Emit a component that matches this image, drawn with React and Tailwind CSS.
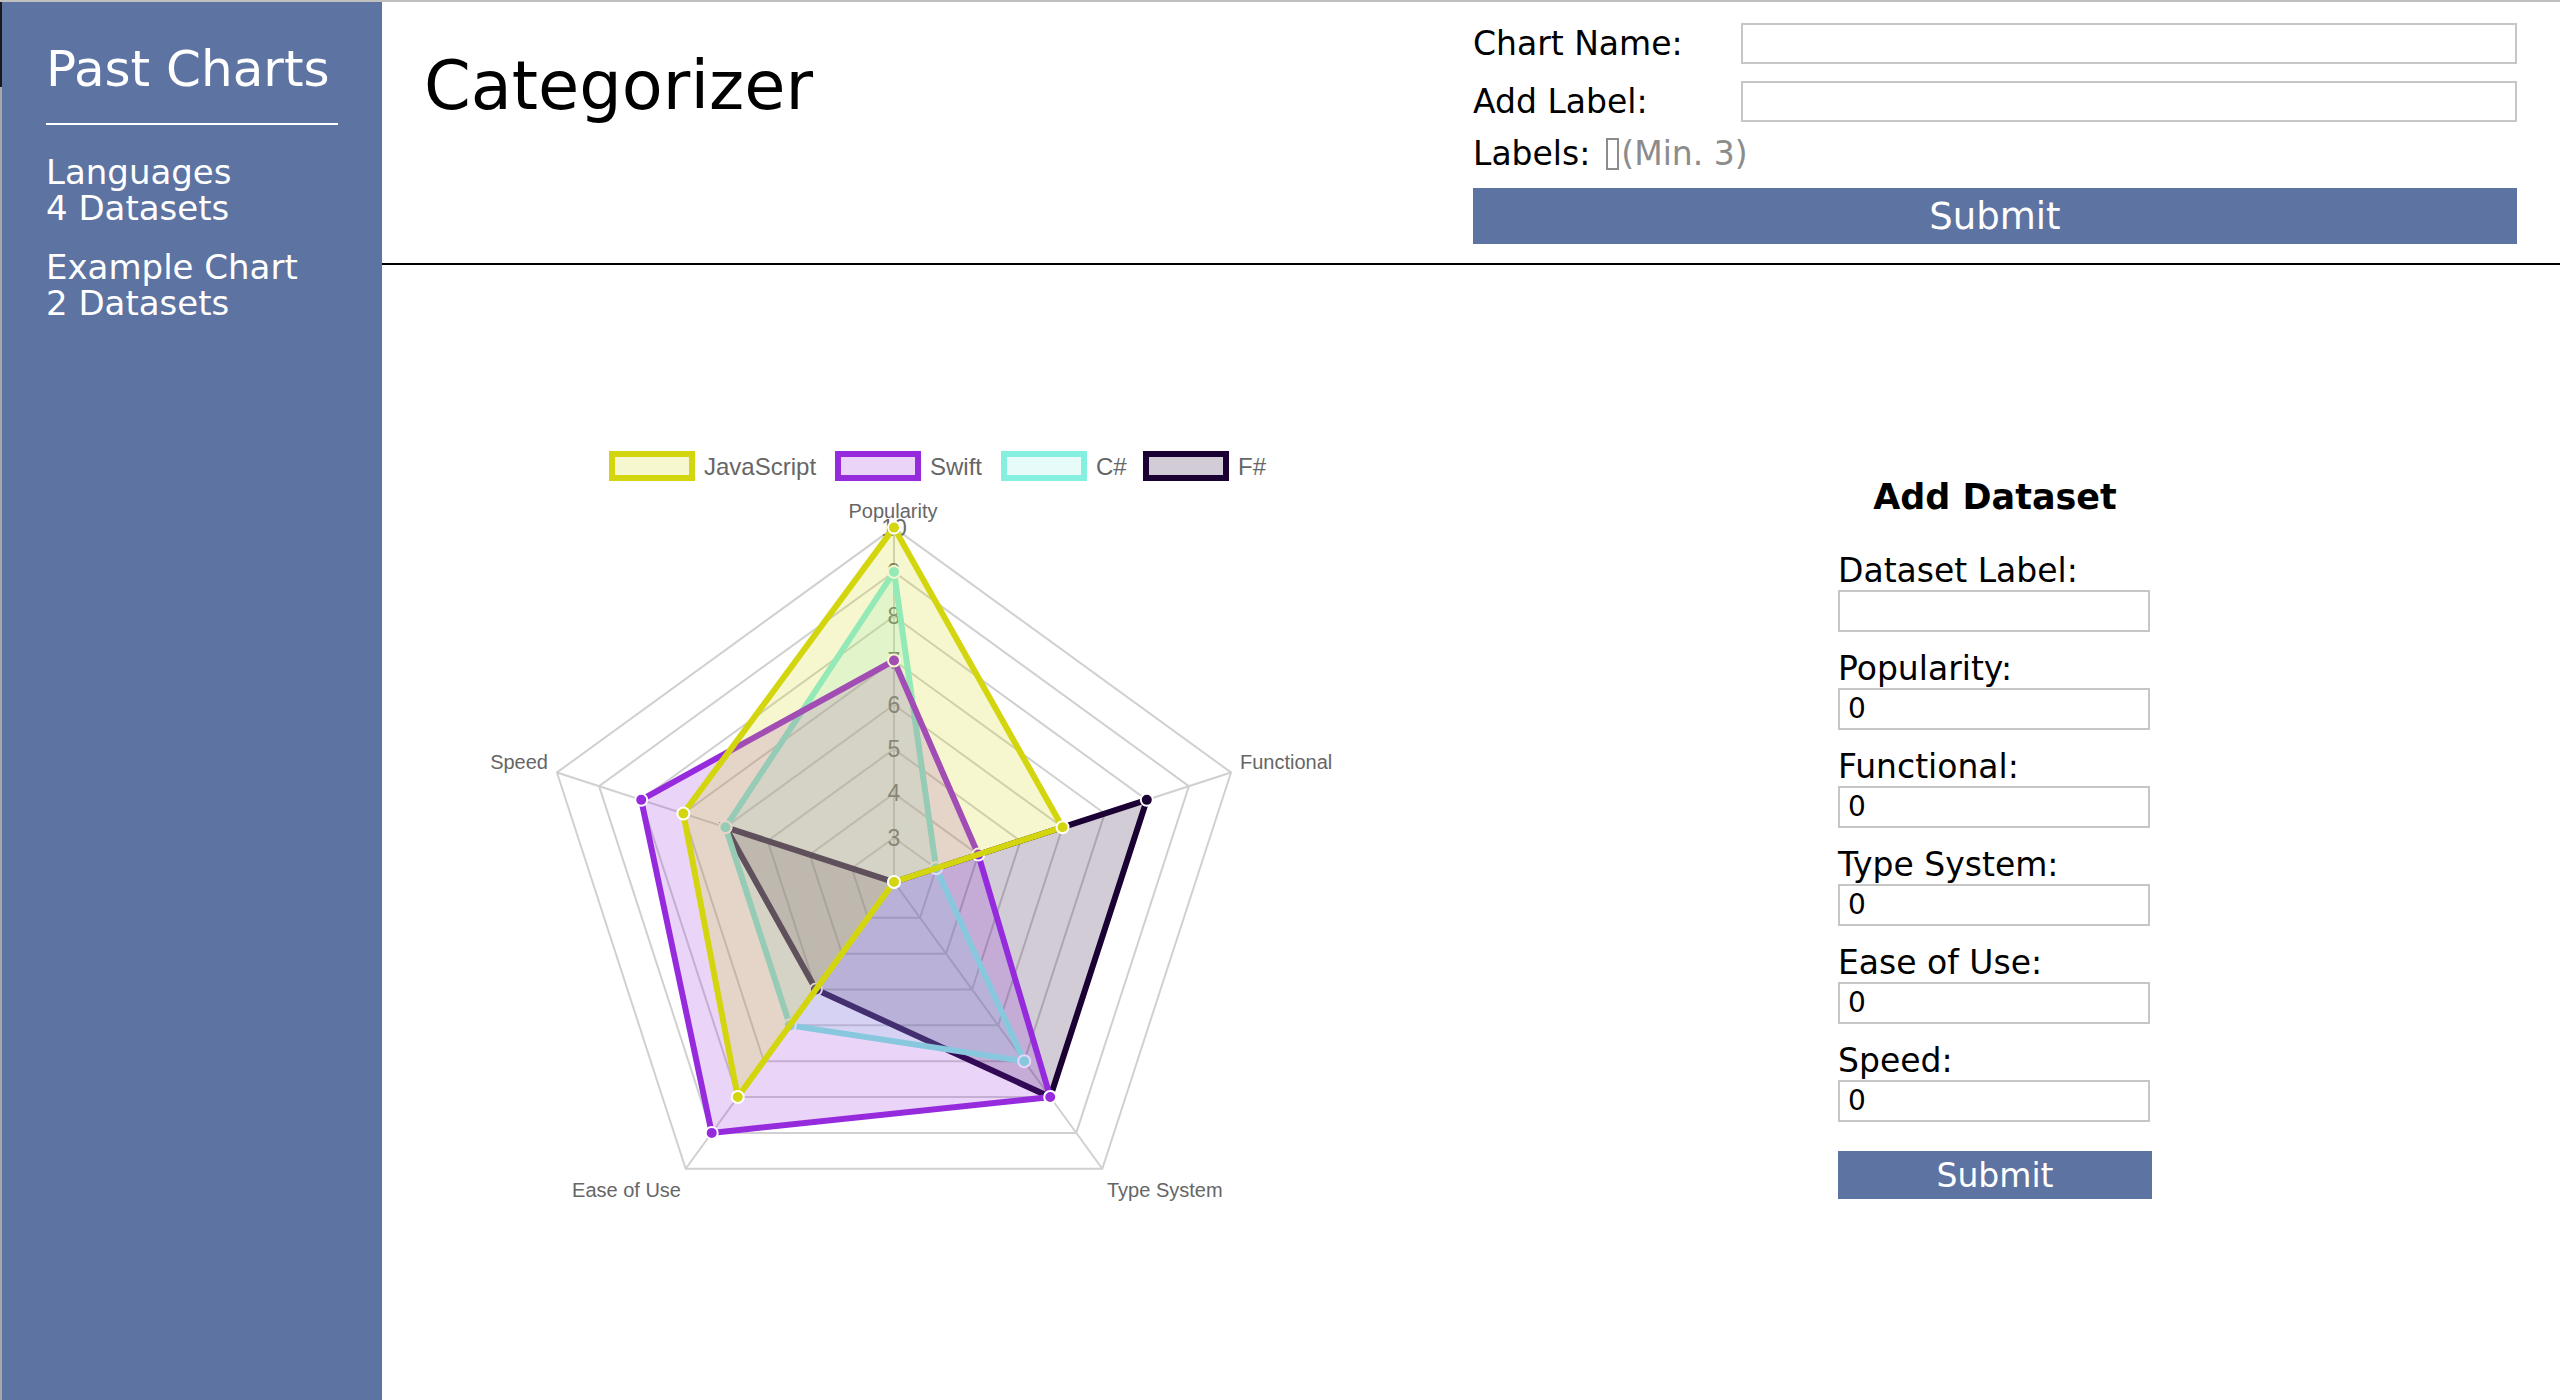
import React from 'react'

const AXES = ['Popularity', 'Functional', 'Type System', 'Ease of Use', 'Speed']

const DATASETS = [
  { label: 'JavaScript', color: '#d3d60f', fill: 'rgba(211,214,15,0.2)', data: [10, 6, 2, 8, 7] },
  { label: 'Swift', color: '#962bdd', fill: 'rgba(150,43,221,0.2)', data: [7, 4, 8, 9, 8] },
  { label: 'C#', color: '#85efe0', fill: 'rgba(133,239,224,0.2)', data: [9, 3, 7, 6, 6] },
  { label: 'F#', color: '#1a0033', fill: 'rgba(26,0,51,0.2)', data: [2, 8, 8, 5, 6] },
]

const CX = 894
const CY = 882
const UNIT = 44.3
const MIN = 2

function point(i, v) {
  const a = -Math.PI / 2 + (i * 2 * Math.PI) / 5
  const r = (v - MIN) * UNIT
  return [CX + r * Math.cos(a), CY + r * Math.sin(a)]
}

const poly = vals => vals.map((v, i) => point(i, v).join(',')).join(' ')

const LEGEND_X = [612, 838, 1004, 1146]

function RadarChart() {
  const rings = [3, 4, 5, 6, 7, 8, 9, 10]
  return (
    <svg width="1100" height="1000" viewBox="382 265 1100 1000" className="shrink-0 font-['Liberation_Sans',Arial,sans-serif]">
      {/* legend */}
      {DATASETS.map((d, i) => (
        <g key={d.label}>
          <rect x={LEGEND_X[i]} y={454} width={80} height={24} fill={d.fill} stroke={d.color} strokeWidth={6} />
          <text x={LEGEND_X[i] + 92} y={475} fontSize={24} fill="#666">{d.label}</text>
        </g>
      ))}

      {/* grid */}
      {rings.map(v => (
        <polygon key={v} points={poly([v, v, v, v, v])} fill="none" stroke="#d0d0d0" strokeWidth={2} />
      ))}
      {AXES.map((a, i) => {
        const [x, y] = point(i, 10)
        return <line key={a} x1={CX} y1={CY} x2={x} y2={y} stroke="#d0d0d0" strokeWidth={2} />
      })}

      {/* ticks */}
      {rings.map(v => (
        <text key={v} x={CX} y={CY - (v - MIN) * UNIT + 8} fontSize={23} fill="#6a6a6a" textAnchor="middle">{v}</text>
      ))}

      {/* point labels */}
      <g fontSize={20} fill="#666">
        <text x={893} y={518} textAnchor="middle">Popularity</text>
        <text x={1240} y={769}>Functional</text>
        <text x={1107} y={1197}>Type System</text>
        <text x={681} y={1197} textAnchor="end">Ease of Use</text>
        <text x={548} y={769} textAnchor="end">Speed</text>
      </g>

      {/* datasets, last one drawn first */}
      {[...DATASETS].reverse().map(d => (
        <g key={d.label}>
          <polygon points={poly(d.data)} fill={d.fill} stroke={d.color} strokeWidth={6} strokeLinejoin="miter" />
          {d.data.map((v, i) => {
            const [x, y] = point(i, v)
            return <circle key={i} cx={x} cy={y} r={6} fill={d.color} stroke="#fff" strokeWidth={2} />
          })}
        </g>
      ))}
    </svg>
  )
}

function Field({ label, value = '0' }) {
  return (
    <div className="flex flex-col">
      <label className="text-[33px] leading-[39px]">{label}</label>
      <input defaultValue={value} className="w-[312px] h-[42px] border-2 border-[#c6c6c6] px-[8px] text-[28px] outline-none" />
    </div>
  )
}

export default function App() {
  return (
    <div className="relative flex min-h-[1400px] border-t-2 border-[#c0c0c0] bg-white text-black font-['DejaVu_Sans','Noto_Sans',sans-serif]">
      <div className="absolute left-0 top-0 w-[2px] h-[85px] bg-[#1a1a1a]" />

      <aside className="w-[382px] shrink-0 border-l-2 border-[#a8a8a8] bg-[#5d73a2] pl-[44px] pt-[38px] text-white">
        <h2 className="text-[50px] leading-[58px]">Past Charts</h2>
        <div className="mt-[25px] h-[2px] w-[292px] bg-white" />
        <div className="mt-[29px] flex flex-col gap-[23px] text-[34px] leading-[36px]">
          <div>
            <div>Languages</div>
            <div>4 Datasets</div>
          </div>
          <div>
            <div>Example Chart</div>
            <div>2 Datasets</div>
          </div>
        </div>
      </aside>

      <main className="flex-1 flex flex-col">
        <header className="h-[263px] border-b-2 border-black flex justify-between">
          <h1 className="pl-[42px] pt-[46px] text-[67px] leading-[76px]">Categorizer</h1>
          <div className="w-[1044px] mr-[43px] pt-[21px] flex flex-col">
            <div className="flex items-center">
              <label className="w-[268px] text-[33px] leading-[41px]">Chart Name:</label>
              <input className="w-[776px] h-[41px] border-2 border-[#c6c6c6] outline-none" />
            </div>
            <div className="mt-[17px] flex items-center">
              <label className="w-[268px] text-[33px] leading-[41px]">Add Label:</label>
              <input className="w-[776px] h-[41px] border-2 border-[#c6c6c6] outline-none" />
            </div>
            <div className="mt-[12px] h-[40px] flex items-center text-[33px] leading-[40px]">
              <span>Labels:</span>
              <span className="ml-[16px] inline-block w-[13px] h-[32px] border-2 border-[#8c8c8c]" />
              <span className="ml-[2px] text-[#8c8c8c]">(Min. 3)</span>
            </div>
            <button className="mt-[14px] h-[56px] w-full bg-[#5d73a2] text-white text-[37px] leading-none">Submit</button>
          </div>
        </header>

        <div className="flex">
          <RadarChart />
          <div className="ml-[356px] pt-[212px] w-[314px] flex flex-col">
            <h3 className="text-center text-[35px] leading-[40px] font-bold">Add Dataset</h3>
            <div className="mt-[34px] flex flex-col gap-[17px]">
              <Field label="Dataset Label:" value="" />
              <Field label="Popularity:" />
              <Field label="Functional:" />
              <Field label="Type System:" />
              <Field label="Ease of Use:" />
              <Field label="Speed:" />
            </div>
            <button className="mt-[29px] h-[48px] w-[314px] bg-[#5d73a2] text-white text-[33px] leading-none">Submit</button>
          </div>
        </div>
      </main>
    </div>
  )
}
